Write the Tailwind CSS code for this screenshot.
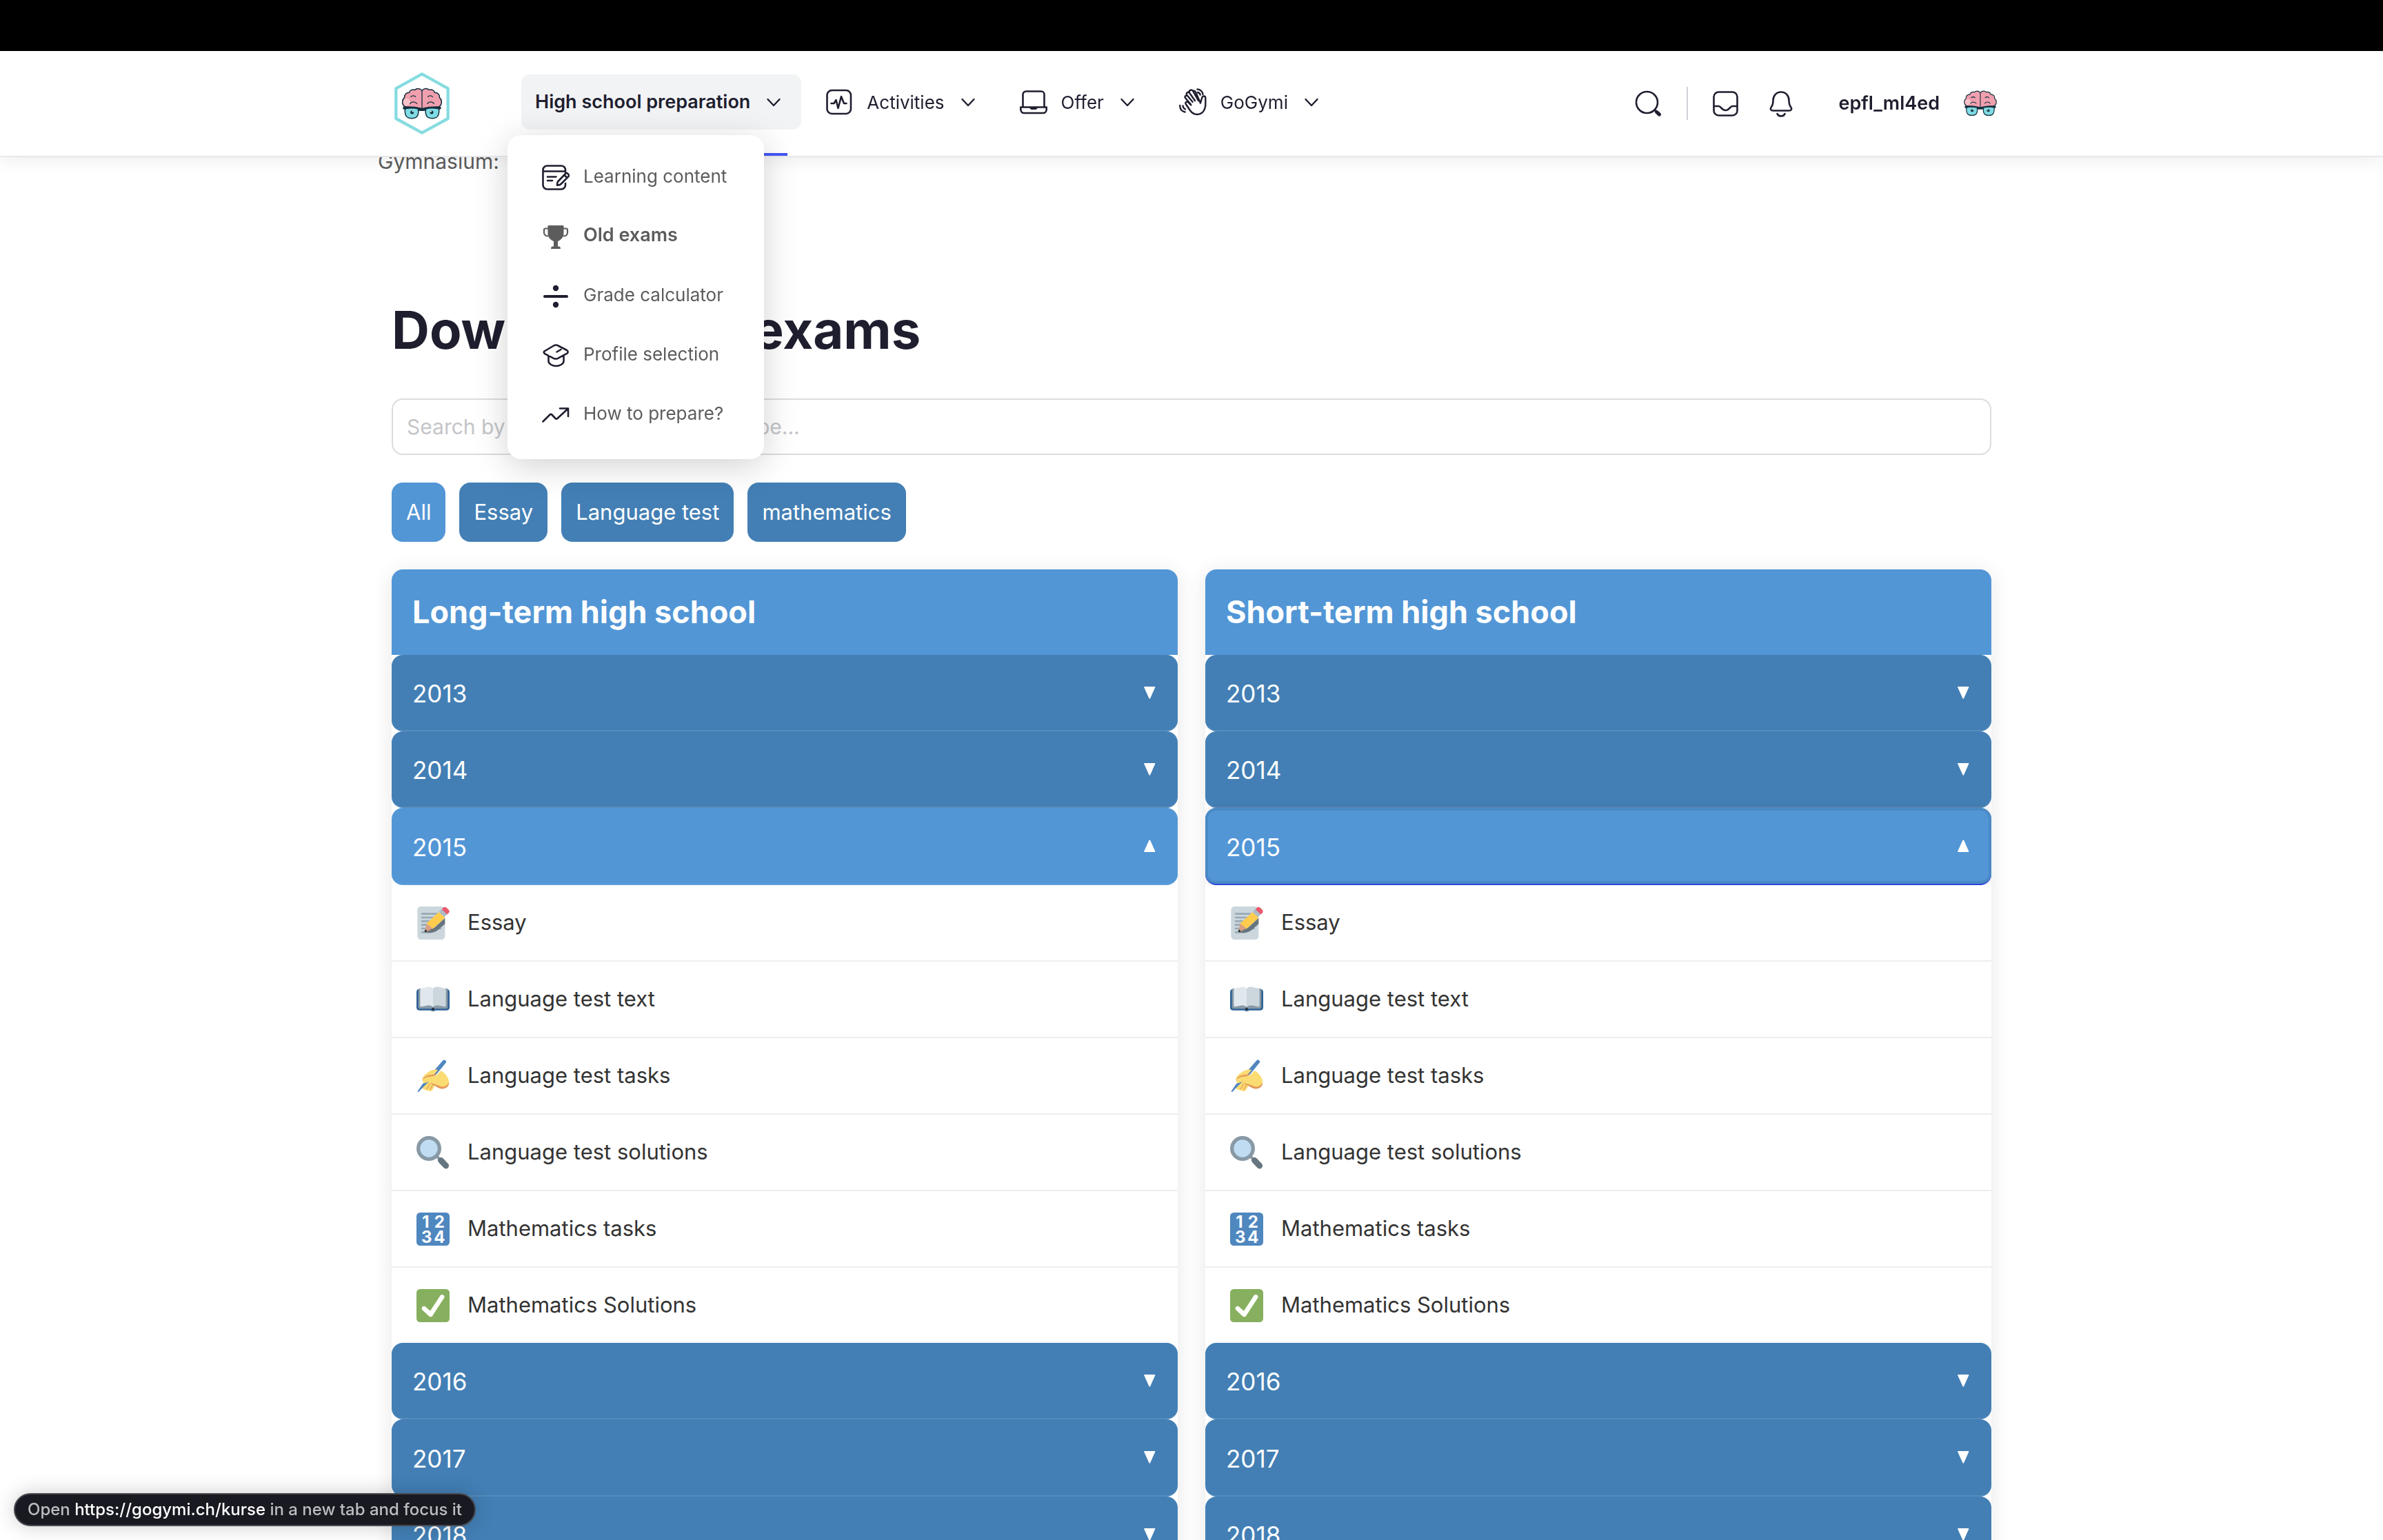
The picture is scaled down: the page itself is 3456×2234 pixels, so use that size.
<!DOCTYPE html>
<html lang="en">
<head>
<meta charset="utf-8">
<meta name="viewport" content="width=device-width, initial-scale=1">
<title>GoGymi – Old exams</title>
<script src="https://cdn.jsdelivr.net/npm/@tailwindcss/browser@4"></script>
</head>
<body class="h-screen overflow-hidden bg-white font-['Inter',sans-serif] text-[#1e1e2f]">

<!-- Shared icons -->
<svg class="hidden" aria-hidden="true">
  <symbol id="chevron" viewBox="0 0 20 20"><path d="M1.500 6l8.500 9 8.500-9" fill="none" stroke="currentColor" stroke-width="2.400" stroke-linecap="round" stroke-linejoin="round"/></symbol>
  <symbol id="tri-down" viewBox="0 0 20 20"><path d="M2 1h14.500q1.200 0 .7 1.200l-7 15.800q-.9 1.600-1.800 0l-7.100-15.800Q.9 1 2 1z" fill="currentColor"/></symbol>
  <symbol id="tri-up" viewBox="0 0 20 20"><path d="M2 19h14.500q1.200 0 .7-1.200l-7-15.800q-.9-1.600-1.800 0l-7.100 15.800Q.9 19 2 19z" fill="currentColor"/></symbol>
  <symbol id="brain" viewBox="32 67 176 138">
    <path d="M120 80C112 68 96 68 90 76 78 72 66 78 65 88 50 88 42 98 44 110 32 118 32 138 42 146 48 154 60 156 70 154L120 158 170 154C180 156 192 154 198 146 208 138 208 118 196 110 198 98 190 88 175 88 174 78 162 72 150 76 144 68 128 68 120 80Z" fill="#f09fae" stroke="#13303f" stroke-width="4.500" stroke-linejoin="round"/>
    <path d="M44 116c12-8 20 0 28 14-8 14-20 20-30 10-6-8-4-20 2-24z" fill="#fbd0d6" opacity=".7"/>
    <path d="M120 80v76M72 106c4-6 16-6 20 0M146 106c4-6 16-6 20 0M68 136c6-10 22-10 30 0M144 136c6-10 22-10 28 0" fill="none" stroke="#13303f" stroke-width="4" stroke-linecap="round"/>
    <path d="M38 149c14-2 56-2 82 7 26-9 68-9 82-7l1 9-6 4-6-3-66 9h-12l-66-9-6 3-4-4z" fill="#13303f"/>
    <path d="M46 160c10-7 44-6 57-1 4 14 0 34-12 38-8 4-24 4-32 0-10-5-14-22-13-37zM194 160c-10-7-44-6-57-1-4 14 0 34 12 38 8 4 24 4 32 0 10-5 14-22 13-37z" fill="#7fdbe4" stroke="#13303f" stroke-width="4.500"/>
    <circle cx="77" cy="174" r="7.500" fill="#13303f"/><circle cx="162" cy="174" r="7.500" fill="#13303f"/>
    <circle cx="80" cy="170" r="3" fill="#fff"/><circle cx="159" cy="170" r="3" fill="#fff"/>
  </symbol>
  <symbol id="memo" viewBox="0 0 36 36">
    <path fill="#ccd6dd" d="M31 32c0 2.209-1.791 4-4 4H5c-2.209 0-4-1.791-4-4V4c0-2.209 1.791-4 4-4h22c2.209 0 4 1.791 4 4v28z"/>
    <path stroke="#99aab5" stroke-width="2" stroke-linecap="round" d="M6 8h16M6 12h14M6 16h11M6 20h7M6 24h20M6 28h5"/>
    <path fill="#66757f" d="M31 12.500V19l-7.500 6.500c-3 2.300-6 3.200-9.500 3.300-2 0-4.200-.3-4.500-1.800l10-4z"/>
    <path fill="#d99e82" d="M11 18.200l6.600 5.600-7 3.900c-1 .4-1.500-.3-1.300-1.200z"/>
    <path fill="#ffcc4d" d="M24.300 6.200l6.800 6-13.400 12.200c-.8-.3-1.200-1.300-1.800-2.200-1-.2-1.700-.7-2-1.700-1.100 0-2-.5-2.900-2.100z"/>
    <path fill="#292f33" d="M9.600 25.200c1 .2 1.600.9 1.900 1.700l-1.300 1c-.9.4-1.700-.4-1.400-1.300z"/>
    <path fill="#ccd6dd" d="M27.700 2.800l5.700 5.500-3 3.200-6-5.500z"/>
    <path fill="none" stroke="#99aab5" stroke-width="1" d="M25 5.300l5.900 5.500M26.200 4.100l5.900 5.500M27.300 3l5.900 5.500"/>
    <path fill="#ea596e" d="M28.400 2.300c1-1.700 2.800-2.200 4.300-1l2.300 2.300c1.200 1.300 1 2.800-.6 4.100l-1 .9-5.800-5.500z"/>
  </symbol>
  <symbol id="book" viewBox="0 0 36 36">
    <path fill="#2f6297" d="M2.500 6.500h31C35 6.800 36 8 36 10v16.500c0 2-1 3.300-3 3.300H20.500c-.5 1.200-4.500 1.200-5 0H3c-2 0-3-1.300-3-3.300V10c0-2 1-3.200 2.500-3.500z"/>
    <path fill="#8899a6" d="M3.500 6h29c1 0 1.500.7 1.500 1.500V26c0 1.200-.8 2-2 2H4c-1.200 0-2-.8-2-2V7.500C2 6.700 2.500 6 3.500 6z"/>
    <path fill="#e1e8ed" d="M18 6c-2.500-2.500-5.500-2-9-1-2 .6-5 .5-5 2.500v16.800c0 1 .7 1.400 1.700 1.300C10 25 14 23 18 26z"/>
    <path fill="#ccd6dd" d="M18 6c2.500-2.500 5.500-2 9-1 2 .6 5 .5 5 2.500v16.800c0 1-.7 1.400-1.700 1.300C26 25 22 23 18 26z"/>
    <circle cx="18" cy="28.200" r="1.400" fill="#292f33"/>
  </symbol>
  <symbol id="writing" viewBox="0 0 36 36">
    <path fill="#4f87bf" d="M29 .8c1.300-1.300 4 .5 3.200 2.300L21 17l-7 1z"/>
    <path fill="#fadc72" d="M14 13c3-2 7-2 9.500-1.700l-5.500 6.200h3.600l5-5.300c3.600 1.600 8.800 7 8.800 12.800 0 4.300-3.700 6.900-7.700 6.500-3.400-.3-5.200-2.500-8.200-2.500-1 1.800-1.500 4.600-4 5.400-2 .3-3-.3-4.500-1-2-.3-3.500-1-5-2.400l2-5-1.700-3.500c-.3-4 3.700-7 7.700-9.500z"/>
    <path fill="#e5985a" d="M6.200 22c2-3.600 6-5.300 11-5.500 2-.2 3.500-.6 5-1.800-1.200 2.700-3.200 3.500-6 3.700-4 .3-7.500 1.700-10 3.600zM35.300 25c.2 4.700-3.500 7.200-8 6.800-3.700-.3-5.200-2.600-7.900-3.500-2-.6-3.200-1.700-4.400-3.600 3 2.200 6.500 2.300 9 3.600 4.700 2.600 9.400 1 11.300-3.300z"/>
    <path fill="none" stroke="#e5985a" stroke-width=".8" stroke-linecap="round" d="M17.500 27c-.6 2.300-1.200 4.200-2.600 5.500M14.300 26.300c-.6 2.300-1.600 4.200-3.300 5.800"/>
    <path fill="#4f87bf" d="M7 26c2.200-.2 4-.8 6.500-2L9.800 27.500 2.500 35c-.8.7-1.500.2-1-.8z"/>
  </symbol>
  <symbol id="magnifier" viewBox="0 0 36 36">
    <path stroke="#8899a6" stroke-width="3" d="M21 21l5 5"/>
    <path stroke="#66757f" stroke-width="6.500" stroke-linecap="round" d="M26.500 26.500l5.500 5.800"/>
    <circle cx="13.500" cy="13.500" r="11.500" fill="#bfdcf3" stroke="#8899a6" stroke-width="4"/>
  </symbol>
  <symbol id="numbers" viewBox="0 0 36 36">
    <rect width="36" height="36" rx="4" fill="#4f87bf"/>
    <g fill="#fff" font-family="Inter, sans-serif" font-weight="700" font-size="18" text-anchor="middle"><text x="10" y="16.500">1</text><text x="25" y="16.500">2</text><text x="11" y="33">3</text><text x="25" y="33">4</text></g>
  </symbol>
  <symbol id="check" viewBox="0 0 36 36">
    <rect width="36" height="36" rx="4" fill="#86b05f"/>
    <path fill="#fff" d="M29.280 6.362c-1.156-.751-2.704-.422-3.458.736L14.936 23.877l-5.029-4.650c-1.014-.938-2.596-.875-3.533.138-.937 1.014-.875 2.596.139 3.533l7.209 6.666c.48.445 1.090.665 1.696.665.673 0 1.534-.282 2.099-1.139.332-.506 12.500-19.270 12.500-19.270.751-1.159.421-2.707-.737-3.458z"/>
  </symbol>
</svg>

<header class="fixed inset-x-0 top-0 z-20">
  <div class="h-[74px] bg-black"></div>
  <div class="h-[152px] bg-white shadow-[0_2px_0_#e9e9ed,0_6px_24px_rgba(0,0,0,0.08)]">
    <div class="mx-auto flex h-[148px] max-w-[2360px] items-center pr-3 pl-6">
      <a href="#" aria-label="GoGymi home" class="mt-1 block">
        <svg class="h-[90px] w-20" viewBox="0 0 240 270">
          <path d="M120 7l113 63v131l-113 62L7 201V70z" fill="none" stroke="#86dce1" stroke-width="13" stroke-linejoin="round"/>
          <use href="#brain" x="32" y="67" width="176" height="138"/>
        </svg>
      </a>

      <nav class="ml-[104px] flex items-center gap-[15px] text-[26px]">
        <div class="relative">
          <button class="flex h-20 items-center gap-6 rounded-xl bg-[#f2f3f5] pr-[30px] pl-5 text-[27px] font-semibold whitespace-nowrap" aria-expanded="true">High school preparation
            <svg class="size-5"><use href="#chevron"/></svg>
          </button>
          <div class="absolute top-[114px] right-5 left-5 h-1 bg-[#4257f5]"></div>
          <ul class="absolute top-[88px] -left-5 w-[372px] rounded-[20px] bg-white pt-4 pb-6 text-[#5c5c5c] shadow-[0_10px_50px_rgba(0,0,0,0.18)]">
            <li><a href="#" class="flex h-[86px] items-center gap-5 pl-[50px]">
              <svg class="mt-1.5 size-10 text-[#1e1e2f]" viewBox="0 0 40 40" fill="none" stroke="currentColor" stroke-width="2.600" stroke-linecap="round" stroke-linejoin="round"><path d="M34 12V8.500a6 6 0 0 0-6-6H7.500a6 6 0 0 0-6 6v22a6 6 0 0 0 6 6H28a6 6 0 0 0 6-6V28M2 10.500h32M8 18.500h12.500M8 24h7M23 25.500L34 14c1-1 2.400-1 3.300-.2l1 1c1 1 1 2.300 0 3.300L27.500 29c-1 1-3.500 1.700-5.500 1.800.1-2 .2-4.400 1-5.300zM32.500 16l3.500 3.500"/></svg>
              <span>Learning content</span></a></li>
            <li><a href="#" class="flex h-[86px] items-center gap-5 pl-[50px]">
              <svg class="mt-1.5 size-10" viewBox="0 0 40 40"><path fill="currentColor" d="M9.500 3h21q1 0 1 1v11c0 5-4 9-8.500 11v7.500h1.500c1.500 0 2.500 1 2.500 3.500H13c0-2.500 1-3.500 2.500-3.500H17V26C12.500 24 8.500 20 8.500 15V4q0-1 1-1z"/><path fill="none" stroke="currentColor" stroke-width="2.200" d="M9 7.500H5Q3 7.500 3 9.500v4C3 17 6 18.500 9 18.500M31 7.500h4q2 0 2 2v4c0 3.500-3 5-6 5"/></svg>
              <span class="text-[27px] font-semibold">Old exams</span></a></li>
            <li><a href="#" class="flex h-[86px] items-center gap-5 pl-[50px]">
              <svg class="mt-1.5 size-10 text-[#1e1e2f]" viewBox="0 0 40 40" fill="currentColor"><circle cx="20" cy="8" r="4.200"/><circle cx="20" cy="32" r="4.200"/><rect x="2" y="18" width="36" height="4" rx="2"/></svg>
              <span>Grade calculator</span></a></li>
            <li><a href="#" class="flex h-[86px] items-center gap-5 pl-[50px]">
              <svg class="mt-1.5 size-10 text-[#1e1e2f]" viewBox="0 0 40 40" fill="none" stroke="currentColor" stroke-width="2.600" stroke-linecap="round" stroke-linejoin="round"><path d="M3.500 13.500L17 5.500c2-1.200 4.500-1.200 6.500 0L36 12c2.200 1.300 2.200 3.500 0 4.800l-13 7c-2 1-4 1-6 0l-12.500-6.500c-2-1.200-2.200-2.600-1-3.800zM21.500 14.500l6-3.500M9.500 20v8c0 4 6 7 11 7s11-3 11-7v-8"/></svg>
              <span>Profile selection</span></a></li>
            <li><a href="#" class="flex h-[86px] items-center gap-5 pl-[50px]">
              <svg class="mt-1.5 size-10 text-[#1e1e2f]" viewBox="0 0 40 40" fill="none" stroke="currentColor" stroke-width="2.600" stroke-linecap="round" stroke-linejoin="round"><path d="M1.500 29.500l10-10c1-1 1.800-1 2.800 0l5.200 5.500c1 1 1.900 1 2.900 0L37.500 11M26 10.500h12V22"/></svg>
              <span>How to prepare?</span></a></li>
          </ul>
        </div>
        <button class="flex h-20 items-center gap-6 pr-[30px] pl-5">
          <span class="flex items-center gap-5">
            <svg class="size-10" viewBox="0 0 40 40" fill="none" stroke="currentColor" stroke-width="2.600" stroke-linecap="round" stroke-linejoin="round"><rect x="2.500" y="3" width="34.500" height="34" rx="7"/><path d="M8.500 22h4l3-5 3 12 4.500-17 4 10h3.500"/></svg>Activities</span>
          <svg class="size-5"><use href="#chevron"/></svg>
        </button>
        <button class="flex h-20 items-center gap-6 pr-[30px] pl-5">
          <span class="flex items-center gap-5">
            <svg class="size-10" viewBox="0 0 40 40" fill="none" stroke="currentColor" stroke-width="2.600" stroke-linejoin="round"><path d="M4.500 27.500V9a4.500 4.500 0 0 1 4.500-4.500h22A4.500 4.500 0 0 1 35.500 9v18.500M1.300 27.500h37.400V31a5 5 0 0 1-5 5H6.300a5 5 0 0 1-5-5z"/><path d="M14 27.500h12q-1 3.500-3.500 3.500h-5Q15 31 14 27.500z" fill="currentColor" stroke="none"/></svg>Offer</span>
          <svg class="size-5"><use href="#chevron"/></svg>
        </button>
        <button class="flex h-20 items-center gap-6 pr-[30px] pl-5">
          <span class="flex items-center gap-5">
            <svg class="size-10" viewBox="0 0 40 40" fill="none" stroke="currentColor" stroke-width="2.400" stroke-linecap="round" stroke-linejoin="round"><path d="M31 21.500l2.300-8c1-3 5-2.500 5 .5v8.500c0 9-4.500 15.500-12 15.500-4.500 0-8-2.500-10.500-6l-6-9c-1.500-2.700 1.500-4.700 3.500-2.700l4 4M17 23.500l-8-9.500c-1.500-2.500 1.500-4.800 3.500-2.700l7 8.500M11.500 10.500c-1.500-3 0-5.500 3-4.500l8.500 12M14.500 6c0-3.500 4-4.500 5.500-2l8 14M20 4c2.500-.8 3.500.3 4 1.500l7 16"/><path d="M26.500 1.500c4.500 0 7.500 3.500 8 7.500M27 6c2 .5 3.200 1.700 3.700 3.500M1.200 25c0 5 2.800 8.500 7.300 9.500M5.500 25.500c.2 2.500 1.300 4 3.500 5"/></svg>GoGymi</span>
          <svg class="size-5"><use href="#chevron"/></svg>
        </button>
      </nav>

      <div class="mt-1 ml-auto flex items-center">
        <button aria-label="Search"><svg class="size-10" viewBox="0 0 40 40" fill="none" stroke="currentColor" stroke-linecap="round"><circle cx="17.500" cy="18.500" r="15.500" stroke-width="2.600"/><path d="M29 30l1.500 1.500" stroke-width="3"/><path d="M31.500 32.500l4 3.500" stroke-width="5"/></svg></button>
        <div class="mx-[35px] h-12 w-0.5 bg-[#d0d1d6]"></div>
        <button aria-label="Inbox"><svg class="size-10" viewBox="0 0 40 40" fill="none" stroke="currentColor" stroke-width="2.600" stroke-linejoin="round"><rect x="2.500" y="3.500" width="34" height="34" rx="7"/><path d="M3 24h6.500c3.500 0 4 6 10 6s6.500-6 10-6h6.500"/></svg></button>
        <button aria-label="Notifications" class="ml-10"><svg class="size-10" viewBox="0 0 40 40" fill="none" stroke="currentColor" stroke-width="2.600" stroke-linecap="round" stroke-linejoin="round"><path d="M20 3.500c-7 0-11.500 5.500-11.500 12 0 5-.5 7-2.500 9.500-2.300 3-1 5.500 2 5.500h24c3 0 4.300-2.500 2-5.500-2-2.500-2.500-4.500-2.500-9.500 0-6.500-4.500-12-11.500-12zM14.500 35c1.500 4.500 9.500 4.500 11 0"/></svg></button>
        <a href="#" class="ml-16 flex items-center gap-[35px] text-[27px] font-semibold">epfl_ml4ed
          <svg class="h-[38px] w-12"><use href="#brain"/></svg></a>
      </div>
    </div>
  </div>
</header>

<main class="pt-[210px]">
  <p class="mx-auto max-w-[2360px] text-[30px] leading-12 text-[#5c5c5c]">Gymnasium:</p>

  <div class="mx-auto mt-[172px] max-w-[2320px]">
    <h1 class="text-[76px] leading-24 font-bold">Download old exams</h1>
    <input type="search" aria-label="Search exams" placeholder="Search by year, subject or school type..." class="mt-[52px] block h-[82px] w-full rounded-2xl border-2 border-[#dcdcdc] px-5 text-[30px] placeholder:text-[#c4c5c9]">

    <div class="mt-10 flex gap-5 text-[31px] text-white">
      <button class="h-[86px] rounded-2xl bg-[#5296d6] px-[21px]">All</button>
      <button class="h-[86px] rounded-2xl bg-[#437fb5] px-[21px]">Essay</button>
      <button class="h-[86px] rounded-2xl bg-[#437fb5] px-[21px]">Language test</button>
      <button class="h-[86px] rounded-2xl bg-[#437fb5] px-[21px]">mathematics</button>
    </div>

    <div class="mt-10 grid grid-cols-2 gap-10">
      <section class="overflow-hidden rounded-2xl bg-white shadow-[0_4px_30px_rgba(0,0,0,0.1)]">
        <h2 class="flex h-[124px] items-center bg-[#5296d6] px-[30px] text-[45px] font-bold text-white">Long-term high school</h2>
        <button class="flex h-[111px] w-full items-center justify-between rounded-2xl border-b-2 border-[#568bbc] bg-[#437fb5] px-[30px] text-[35px] text-white"><span class="pt-1">2013</span><svg class="size-5"><use href="#tri-down"/></svg></button>
        <button class="flex h-[111px] w-full items-center justify-between rounded-2xl border-b-2 border-[#568bbc] bg-[#437fb5] px-[30px] text-[35px] text-white"><span class="pt-1">2014</span><svg class="size-5"><use href="#tri-down"/></svg></button>
        <button class="flex h-28 w-full items-center justify-between rounded-2xl border-b-2 border-[#639fd9] bg-[#5296d6] px-[30px] text-[35px] text-white" aria-expanded="true"><span class="pt-1">2015</span><svg class="size-5"><use href="#tri-up"/></svg></button>
        <ul class="text-[31px] text-[#333]">
          <li class="border-b-2 border-[#eee]"><a href="#" class="flex h-[109px] items-center gap-[26px] px-9"><svg class="size-12"><use href="#memo"/></svg>Essay</a></li>
          <li class="border-b-2 border-[#eee]"><a href="#" class="flex h-[109px] items-center gap-[26px] px-9"><svg class="size-12"><use href="#book"/></svg>Language test text</a></li>
          <li class="border-b-2 border-[#eee]"><a href="#" class="flex h-[109px] items-center gap-[26px] px-9"><svg class="size-12"><use href="#writing"/></svg>Language test tasks</a></li>
          <li class="border-b-2 border-[#eee]"><a href="#" class="flex h-[109px] items-center gap-[26px] px-9"><svg class="size-12"><use href="#magnifier"/></svg>Language test solutions</a></li>
          <li class="border-b-2 border-[#eee]"><a href="#" class="flex h-[109px] items-center gap-[26px] px-9"><svg class="size-12"><use href="#numbers"/></svg>Mathematics tasks</a></li>
          <li><a href="#" class="flex h-[109px] items-center gap-[26px] px-9"><svg class="size-12"><use href="#check"/></svg>Mathematics Solutions</a></li>
        </ul>
        <button class="flex h-[111px] w-full items-center justify-between rounded-2xl border-b-2 border-[#568bbc] bg-[#437fb5] px-[30px] text-[35px] text-white"><span class="pt-1">2016</span><svg class="size-5"><use href="#tri-down"/></svg></button>
        <button class="flex h-28 w-full items-center justify-between rounded-2xl border-b-2 border-[#568bbc] bg-[#437fb5] px-[30px] text-[35px] text-white"><span class="pt-1">2017</span><svg class="size-5"><use href="#tri-down"/></svg></button>
        <button class="flex h-[111px] w-full items-center justify-between rounded-2xl border-b-2 border-[#568bbc] bg-[#437fb5] px-[30px] text-[35px] text-white"><span class="pt-1">2018</span><svg class="size-5"><use href="#tri-down"/></svg></button>
      </section>

      <section class="overflow-hidden rounded-2xl bg-white shadow-[0_4px_30px_rgba(0,0,0,0.1)]">
        <h2 class="flex h-[124px] items-center bg-[#5296d6] px-[30px] text-[45px] font-bold text-white">Short-term high school</h2>
        <button class="flex h-[111px] w-full items-center justify-between rounded-2xl border-b-2 border-[#568bbc] bg-[#437fb5] px-[30px] text-[35px] text-white"><span class="pt-1">2013</span><svg class="size-5"><use href="#tri-down"/></svg></button>
        <button class="flex h-[111px] w-full items-center justify-between rounded-2xl border-b-2 border-[#568bbc] bg-[#437fb5] px-[30px] text-[35px] text-white"><span class="pt-1">2014</span><svg class="size-5"><use href="#tri-down"/></svg></button>
        <button class="relative flex h-28 w-full items-center justify-between rounded-2xl border-b-2 border-[#2743dc] bg-[#5296d6] px-[30px] text-[35px] text-white shadow-[inset_0_0_0_4px_#4a8ac5,0_0_8px_rgba(60,50,60,0.2)]" aria-expanded="true"><span class="pt-1">2015</span><svg class="size-5"><use href="#tri-up"/></svg></button>
        <ul class="relative bg-white text-[31px] text-[#333]">
          <li class="border-b-2 border-[#eee]"><a href="#" class="flex h-[109px] items-center gap-[26px] px-9"><svg class="size-12"><use href="#memo"/></svg>Essay</a></li>
          <li class="border-b-2 border-[#eee]"><a href="#" class="flex h-[109px] items-center gap-[26px] px-9"><svg class="size-12"><use href="#book"/></svg>Language test text</a></li>
          <li class="border-b-2 border-[#eee]"><a href="#" class="flex h-[109px] items-center gap-[26px] px-9"><svg class="size-12"><use href="#writing"/></svg>Language test tasks</a></li>
          <li class="border-b-2 border-[#eee]"><a href="#" class="flex h-[109px] items-center gap-[26px] px-9"><svg class="size-12"><use href="#magnifier"/></svg>Language test solutions</a></li>
          <li class="border-b-2 border-[#eee]"><a href="#" class="flex h-[109px] items-center gap-[26px] px-9"><svg class="size-12"><use href="#numbers"/></svg>Mathematics tasks</a></li>
          <li><a href="#" class="flex h-[109px] items-center gap-[26px] px-9"><svg class="size-12"><use href="#check"/></svg>Mathematics Solutions</a></li>
        </ul>
        <button class="flex h-[111px] w-full items-center justify-between rounded-2xl border-b-2 border-[#568bbc] bg-[#437fb5] px-[30px] text-[35px] text-white"><span class="pt-1">2016</span><svg class="size-5"><use href="#tri-down"/></svg></button>
        <button class="flex h-28 w-full items-center justify-between rounded-2xl border-b-2 border-[#568bbc] bg-[#437fb5] px-[30px] text-[35px] text-white"><span class="pt-1">2017</span><svg class="size-5"><use href="#tri-down"/></svg></button>
        <button class="flex h-[111px] w-full items-center justify-between rounded-2xl border-b-2 border-[#568bbc] bg-[#437fb5] px-[30px] text-[35px] text-white"><span class="pt-1">2018</span><svg class="size-5"><use href="#tri-down"/></svg></button>
      </section>
    </div>
  </div>
</main>

<div role="status" class="fixed bottom-5 left-5 z-30 flex h-12 items-center rounded-3xl border-2 border-[#48484f] bg-[#191922] px-[18px] text-2xl font-medium whitespace-pre text-[#bdbdc0] shadow-[0_0_30px_rgba(0,0,0,0.2)]">Open <span class="text-white">https://gogymi.ch/kurse</span> in a new tab and focus it</div>

</body>
</html>
